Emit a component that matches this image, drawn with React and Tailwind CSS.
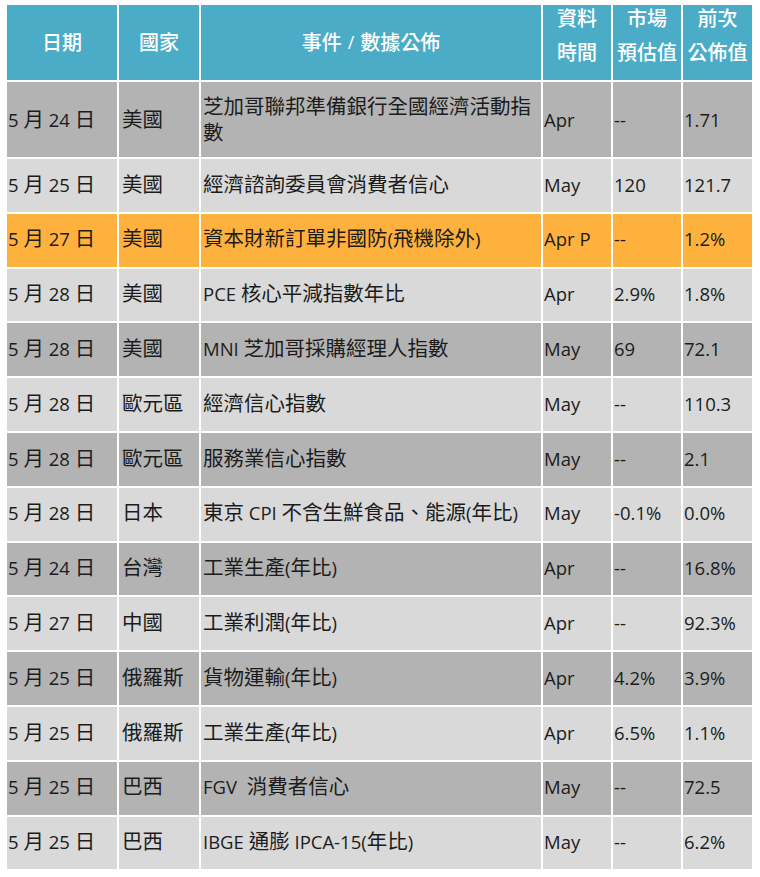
import React from "react";

const rows = [
  { d: "5 月 24 日", c: "美國", e: "芝加哥聯邦準備銀行全國經濟活動指數", t: "Apr", f: "--", p: "1.71", bg: "dark", tall: true },
  { d: "5 月 25 日", c: "美國", e: "經濟諮詢委員會消費者信心", t: "May", f: "120", p: "121.7", bg: "light" },
  { d: "5 月 27 日", c: "美國", e: "資本財新訂單非國防(飛機除外)", t: "Apr P", f: "--", p: "1.2%", bg: "orange" },
  { d: "5 月 28 日", c: "美國", e: "PCE 核心平減指數年比", t: "Apr", f: "2.9%", p: "1.8%", bg: "light" },
  { d: "5 月 28 日", c: "美國", e: "MNI 芝加哥採購經理人指數", t: "May", f: "69", p: "72.1", bg: "dark" },
  { d: "5 月 28 日", c: "歐元區", e: "經濟信心指數", t: "May", f: "--", p: "110.3", bg: "light" },
  { d: "5 月 28 日", c: "歐元區", e: "服務業信心指數", t: "May", f: "--", p: "2.1", bg: "dark" },
  { d: "5 月 28 日", c: "日本", e: "東京 CPI 不含生鮮食品、能源(年比)", t: "May", f: "-0.1%", p: "0.0%", bg: "light" },
  { d: "5 月 24 日", c: "台灣", e: "工業生產(年比)", t: "Apr", f: "--", p: "16.8%", bg: "dark" },
  { d: "5 月 27 日", c: "中國", e: "工業利潤(年比)", t: "Apr", f: "--", p: "92.3%", bg: "light" },
  { d: "5 月 25 日", c: "俄羅斯", e: "貨物運輸(年比)", t: "Apr", f: "4.2%", p: "3.9%", bg: "dark" },
  { d: "5 月 25 日", c: "俄羅斯", e: "工業生產(年比)", t: "Apr", f: "6.5%", p: "1.1%", bg: "light" },
  { d: "5 月 25 日", c: "巴西", e: "FGV  消費者信心", t: "May", f: "--", p: "72.5", bg: "dark" },
  { d: "5 月 25 日", c: "巴西", e: "IBGE 通膨 IPCA-15(年比)", t: "May", f: "--", p: "6.2%", bg: "light" },
];

function Mixed({ s }) {
  const parts = s.split(/([\u3000-\u303f\u3400-\u9fff\uff00-\uffef]+)/);
  return (
    <>
      {parts.map((p, i) =>
        p === "" ? null : /[\u3000-\u303f\u3400-\u9fff\uff00-\uffef]/.test(p) ? (
          <span key={i} className="text-[20.5px]">{p}</span>
        ) : (
          <span key={i} className="text-[18.5px] whitespace-pre">{p}</span>
        )
      )}
    </>
  );
}

function Cell({ bg, tall, pad, children }) {
  const bgc =
    bg === "dark" ? "bg-[#b3b3b3]" : bg === "orange" ? "bg-[#ffb13d]" : "bg-[#d9d9d9]";
  return (
    <div
      className={`${bgc} ${tall ? "h-[75px]" : "h-[52.8px]"} ${pad} flex items-center text-[#1c1c1c] leading-[23.5px] overflow-hidden`}
    >
      <div className={tall ? "mt-[2px]" : ""}>{children}</div>
    </div>
  );
}

function Head({ children, two }) {
  return (
    <div className="h-[75px] bg-[#4aacc6] text-white font-medium text-[20px] flex justify-center overflow-hidden">
      {two ? (
        <div className="-mt-[3px] leading-[34px] text-center">{children}</div>
      ) : (
        <div className="flex items-center">{children}</div>
      )}
    </div>
  );
}

export default function App() {
  return (
    <div
      className="w-[760px] h-[877px] bg-white pt-[5px] pl-[7px]"
      style={{ fontFamily: '"Open Sans", "Noto Sans CJK TC", sans-serif' }}
    >
      <div className="grid grid-cols-[110px_80px_340px_68px_68px_69px] gap-[2px]">
        <Head>日期</Head>
        <Head>國家</Head>
        <Head>
          <span>事件</span>
          <span className="text-[18px] mx-[6px]">/</span>
          <span>數據公佈</span>
        </Head>
        <Head two>
          <div>資料</div>
          <div>時間</div>
        </Head>
        <Head two>
          <div>市場</div>
          <div>預估值</div>
        </Head>
        <Head two>
          <div>前次</div>
          <div>公佈值</div>
        </Head>
        {rows.map((r, i) => (
          <React.Fragment key={i}>
            <Cell bg={r.bg} tall={r.tall} pad="pl-[1px]">
              <Mixed s={r.d} />
            </Cell>
            <Cell bg={r.bg} tall={r.tall} pad="pl-[3px]">
              <Mixed s={r.c} />
            </Cell>
            <Cell bg={r.bg} tall={r.tall} pad="pl-[2px] pr-[4px]">
              <Mixed s={r.e} />
            </Cell>
            <Cell bg={r.bg} tall={r.tall} pad="pl-[1px]">
              <Mixed s={r.t} />
            </Cell>
            <Cell bg={r.bg} tall={r.tall} pad="pl-[1px]">
              <Mixed s={r.f} />
            </Cell>
            <Cell bg={r.bg} tall={r.tall} pad="pl-[1px]">
              <Mixed s={r.p} />
            </Cell>
          </React.Fragment>
        ))}
      </div>
    </div>
  );
}
